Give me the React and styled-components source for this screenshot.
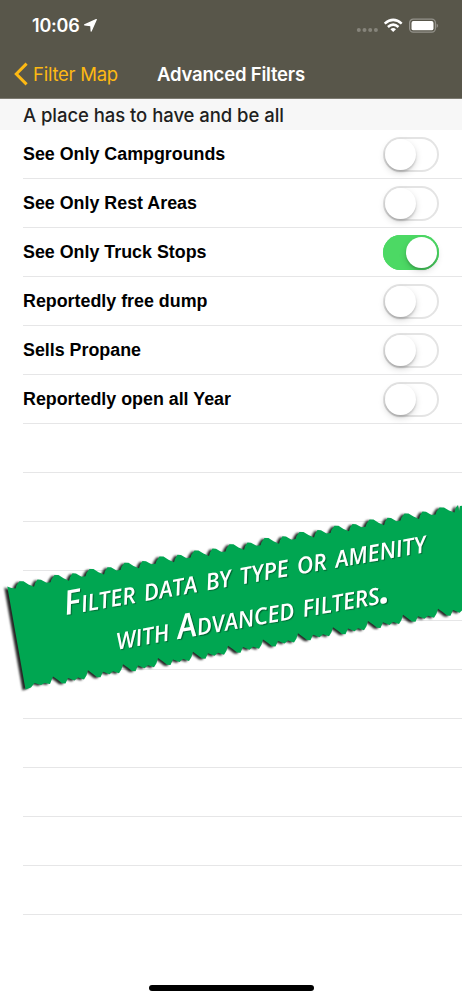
import React from "react"
import styled, { createGlobalStyle } from 'styled-components'

const olive = '#58564a'
const amber = '#fdb913'
const line = '#e6e6e7'
const green = '#4cd964'
const ribbon = '#00a651'

const filters = [
    { label: 'See Only Campgrounds', on: false },
    { label: 'See Only Rest Areas', on: false },
    { label: 'See Only Truck Stops', on: true },
    { label: 'Reportedly free dump', on: false },
    { label: 'Sells Propane', on: false },
    { label: 'Reportedly open all Year', on: false },
]

const emptyRows = 10

// one repeat of the torn edge, relative to where the repeat starts
const topTeeth = [[0, .6], [1, -2.5], [4, -6.6], [8, -6.6], [13, -3.4], [18.5, -1], [19.5, -4.5], [22, -8.4], [25.5, -8.2], [31, -5]]
const bottomTeeth = [[0, -1], [5, 2.6], [9, 5.8], [12.5, 6], [15, .4], [21.5, 3], [25, 0], [31, 2], [33.5, -2]]

const repeat = (teeth, x, y, from, to) => {
    const points = []
    for (let i = from; i <= to; i++) {
        teeth.forEach(([dx, dy]) => points.push([x + i * 35 + dx, y - i * 6.17 + dy]))
    }
    return points
}

const outline = [
    [7.3, 586.5], [11.3, 588],
    ...repeat(topTeeth, 50.5, 581.7, -1, 10),
    [435.5, 514.5], [436.5, 511.5], [439.5, 507.5], [444, 507.5], [449, 510.5], [454.5, 512.5], [455.5, 508], [458, 505], [459, 511], [460, 506], [475, 504],
    [475, 608],
    ...repeat(bottomTeeth, 53, 677.5, 0, 11).reverse(),
    [50, 684], [44.5, 683], [41, 685], [34.5, 683], [31, 687.5], [25.5, 689.5],
].map(p => p.join(',')).join(' ')

const GlobalStyle = createGlobalStyle`
body {
    margin: 0;
    background: white;
}
`

const Screen = styled.div`
position: relative;
display: flex;
flex-direction: column;
width: 462px;
height: 1000px;
overflow: hidden;
background: white;
font-family: Inter, 'Liberation Sans', sans-serif;
`

const Header = styled.header`
flex: none;
box-sizing: border-box;
height: 98.6px;
background: ${olive};
border-bottom: 1px solid #7c7a71;
color: white;
`

const StatusBar = styled.div`
display: flex;
align-items: center;
justify-content: space-between;
height: 50px;
padding: 1px 24px 0 32px;
box-sizing: border-box;
`

const Clock = styled.div`
display: flex;
align-items: center;
gap: 4px;
font-size: 18px;
font-weight: 600;
letter-spacing: -.2px;
`

const StatusIcons = styled.div`
display: flex;
align-items: center;
`

const NavBar = styled.nav`
display: grid;
grid-template-columns: 1fr auto 1fr;
align-items: center;
height: 48px;
padding: 0 14px;
font-size: 18.5px;
`

const BackLink = styled.div`
display: flex;
align-items: center;
gap: 4px;
color: ${amber};
letter-spacing: -.25px;
`

const Title = styled.h1`
margin: 0;
font-size: 18.5px;
font-weight: 600;
letter-spacing: -.2px;
`

const SectionTitle = styled.h2`
flex: none;
display: flex;
align-items: center;
box-sizing: border-box;
height: 31.2px;
margin: 0;
padding: 1px 0 0 23px;
background: #f7f7f7;
color: #1f1f21;
font-size: 18.5px;
font-weight: 550;
letter-spacing: -.05px;
`

const List = styled.div`
padding-left: 23px;
`

const Row = styled.div`
display: flex;
align-items: center;
justify-content: space-between;
box-sizing: border-box;
height: 49.08px;
padding: 1px 22.6px 0 0;
border-bottom: 1px solid ${line};
font: bold 17.85px 'Liberation Sans', Arial, sans-serif;
color: black;
`

const Switch = styled.div`
display: flex;
align-items: center;
justify-content: ${p => p.$on ? 'flex-end' : 'flex-start'};
box-sizing: border-box;
width: 56.6px;
height: 35px;
padding: 0 2px;
border-radius: 18px;
background: ${p => p.$on ? green : 'white'};
box-shadow: inset 0 0 0 2px ${p => p.$on ? green : '#e4e4e4'};
`

const Knob = styled.span`
width: 31px;
height: 31px;
border-radius: 50%;
background: white;
box-shadow: 0 3px 7px rgba(0, 0, 0, .15), 0 2px 2px rgba(0, 0, 0, .16);
`

const HomeIndicator = styled.div`
width: 165px;
height: 5.6px;
margin: auto auto 9.5px 148.5px;
border-radius: 3px;
background: black;
`

const Ribbon = styled.div`
position: absolute;
inset: 0;
overflow: hidden;
`

const RibbonShape = styled.svg`
display: block;
filter: drop-shadow(-2.5px 1.5px 1.2px rgba(0, 0, 0, .85));
`

const RibbonText = styled.div`
position: absolute;
left: 66px;
top: 580.5px;
transform: rotate(-9.9deg);
transform-origin: 0 36px;
color: white;
font: italic 600 33.5px/43px 'Open Sans', 'Noto Sans', sans-serif;
font-variant: small-caps;
white-space: nowrap;
text-shadow: 1px 1px 1px rgba(0, 0, 0, .4);
`

const RibbonLine = styled.div`
width: max-content;
margin-left: ${p => p.$indent || 0}px;
transform: scaleX(${p => p.$stretch});
transform-origin: 0 0;
b {
    font-weight: 800;
}
`

const LocationArrow = () => (
    <svg width="13" height="13" viewBox="0 0 13 13">
        <path d="M12.3 .6L7.2 12.1 6.8 6.6 .6 5.9z" fill="white" stroke="white" strokeWidth="1.2" strokeLinejoin="round" />
    </svg>
)

const Signals = () => (
    <svg width="82" height="16" viewBox="0 0 82 16">
        <g fill="#86847b">
            <circle cx="2.8" cy="12" r="2" />
            <circle cx="8.5" cy="12" r="2" />
            <circle cx="14.2" cy="12" r="2" />
            <circle cx="19.9" cy="12" r="2" />
        </g>
        <g fill="none" stroke="white" strokeWidth="2.5">
            <path d="M28.7 5.6Q37.2 -1.8 45.7 5.6" />
            <path d="M31.9 9Q37.2 4.2 42.5 9" />
        </g>
        <path d="M34.4 11.2Q37.2 8.9 40 11.2L37.2 14z" fill="white" />
        <rect x="53.6" y="1.2" width="25.8" height="13" rx="3.6" fill="none" stroke="#94928b" strokeWidth="1.2" />
        <rect x="55.5" y="3.1" width="22" height="9.2" rx="1.9" fill="white" />
        <path d="M80.6 5.5Q82 6.2 82 7.7T80.6 9.9z" fill="#94928b" />
    </svg>
)

const Chevron = () => (
    <svg width="15" height="24" viewBox="0 0 15 24">
        <path d="M12.6 1.6L2.3 12l10.3 10.4" fill="none" stroke={amber} strokeWidth="3" />
    </svg>
)

const App = () => {

    return (
        <Screen>
            <GlobalStyle />
            <Header>
                <StatusBar>
                    <Clock>10:06 <LocationArrow /></Clock>
                    <StatusIcons><Signals /></StatusIcons>
                </StatusBar>
                <NavBar>
                    <BackLink><Chevron />Filter Map</BackLink>
                    <Title>Advanced Filters</Title>
                </NavBar>
            </Header>
            <SectionTitle>A place has to have and be all</SectionTitle>
            <List>
                {filters.map(({ label, on }) => (
                    <Row key={label}>
                        {label}
                        <Switch $on={on}><Knob /></Switch>
                    </Row>
                ))}
                {Array.from({ length: emptyRows }, (_, i) => <Row key={i} />)}
            </List>
            <HomeIndicator />
            <Ribbon>
                <RibbonShape width="462" height="1000" viewBox="0 0 462 1000">
                    <polygon points={outline} fill={ribbon} />
                </RibbonShape>
                <RibbonText>
                    <RibbonLine $stretch={.99}>Filter data by type or amenity</RibbonLine>
                    <RibbonLine $stretch={.984} $indent={44.5}>with Advanced filters<b>.</b></RibbonLine>
                </RibbonText>
            </Ribbon>
        </Screen>
    )
}

export default App
